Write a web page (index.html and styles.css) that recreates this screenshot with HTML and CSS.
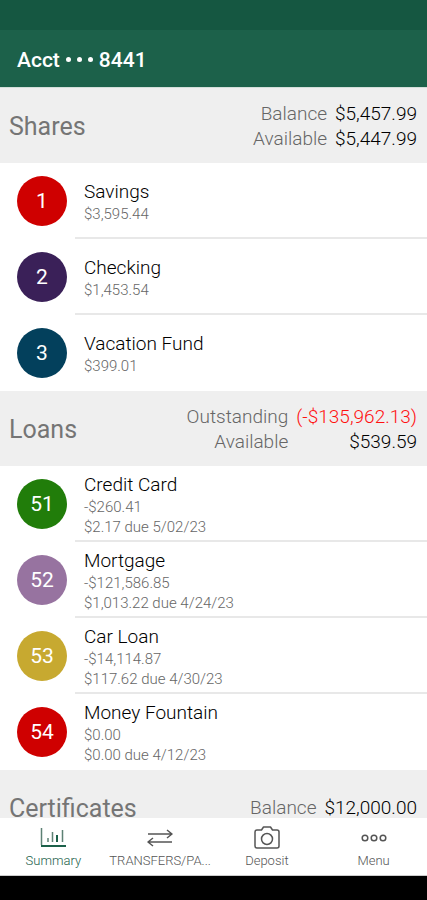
FILE: index.html
```html
<!DOCTYPE html>
<html lang="en">
<head>
<meta charset="utf-8">
<meta name="viewport" content="width=device-width, initial-scale=1">
<title>Account Summary</title>
<link rel="stylesheet" href="styles.css">
</head>
<body>
<div class="status-bar"></div>
<header class="app-bar"><h1 class="app-title">Acct <span class="dots"><i></i><i></i><i></i></span> 8441</h1></header>
<main class="content">
  <section>
    <div class="section-head">
      <h2 class="section-title">Shares</h2>
      <dl class="totals">
        <dt>Balance</dt><dd>$5,457.99</dd>
        <dt>Available</dt><dd>$5,447.99</dd>
      </dl>
    </div>
    <ul class="accounts">
      <li class="account"><span class="badge red">1</span><div class="details"><h3 class="name">Savings</h3><p class="line">$3,595.44</p></div></li>
      <li class="account"><span class="badge indigo">2</span><div class="details"><h3 class="name">Checking</h3><p class="line">$1,453.54</p></div></li>
      <li class="account"><span class="badge navy">3</span><div class="details"><h3 class="name">Vacation Fund</h3><p class="line">$399.01</p></div></li>
    </ul>
  </section>
  <section>
    <div class="section-head">
      <h2 class="section-title">Loans</h2>
      <dl class="totals">
        <dt>Outstanding</dt><dd class="negative">(-$135,962.13)</dd>
        <dt>Available</dt><dd>$539.59</dd>
      </dl>
    </div>
    <ul class="accounts">
      <li class="account"><span class="badge green">51</span><div class="details"><h3 class="name">Credit Card</h3><p class="line">-$260.41</p><p class="line">$2.17 due 5/02/23</p></div></li>
      <li class="account"><span class="badge mauve">52</span><div class="details"><h3 class="name">Mortgage</h3><p class="line">-$121,586.85</p><p class="line">$1,013.22 due 4/24/23</p></div></li>
      <li class="account"><span class="badge gold">53</span><div class="details"><h3 class="name">Car Loan</h3><p class="line">-$14,114.87</p><p class="line">$117.62 due 4/30/23</p></div></li>
      <li class="account"><span class="badge red">54</span><div class="details"><h3 class="name">Money Fountain</h3><p class="line">$0.00</p><p class="line">$0.00 due 4/12/23</p></div></li>
    </ul>
  </section>
  <section>
    <div class="section-head">
      <h2 class="section-title">Certificates</h2>
      <dl class="totals"><dt>Balance</dt><dd>$12,000.00</dd></dl>
    </div>
  </section>
</main>
<nav class="tabs">
  <a class="tab active" href="#summary">
    <svg class="icon" viewBox="0 0 26 24" aria-hidden="true"><path d="M1.500 2v17" stroke="#5d8174" stroke-width="1.500"/><path d="M1 20h25" stroke-width="2"/><path d="M8 12v4M12.500 6v10M22.500 4v12" stroke="#5d8174" stroke-width="1.500"/><path d="M17 9v7" stroke-width="2"/></svg>
    <span class="tab-label">Summary</span>
  </a>
  <a class="tab" href="#transfers">
    <svg class="icon" viewBox="0 0 26 24" aria-hidden="true"><path d="M1 8h24M20 4l5 4-5 4M25 16H1M6 12l-5 4 5 4"/></svg>
    <span class="tab-label">TRANSFERS/PA...</span>
  </a>
  <a class="tab" href="#deposit">
    <svg class="icon" viewBox="0 0 26 24" aria-hidden="true"><path d="M3 4h4.500l2-3h7l2 3H23a2 2 0 0 1 2 2v14a2 2 0 0 1-2 2H3a2 2 0 0 1-2-2V6a2 2 0 0 1 2-2z"/><circle cx="13" cy="13" r="5.500"/></svg>
    <span class="tab-label">Deposit</span>
  </a>
  <a class="tab" href="#menu">
    <svg class="icon" viewBox="0 0 26 24" aria-hidden="true"><circle cx="4" cy="12" r="2.800"/><circle cx="13" cy="12" r="2.800"/><circle cx="22" cy="12" r="2.800"/></svg>
    <span class="tab-label">Menu</span>
  </a>
</nav>
<div class="system-bar"></div>
</body>
</html>
```
FILE: styles.css
```css
* { box-sizing: border-box; }
body, h1, h2, h3, p, ul, dl, dd { margin: 0; padding: 0; }
body {
  display: flex;
  flex-direction: column;
  height: 100vh;
  background: #fff;
  font-family: Roboto, "Liberation Sans", sans-serif;
}
.status-bar { flex: none; height: 30px; background: #155741; }
.app-bar {
  flex: none;
  display: flex;
  align-items: center;
  height: 58px;
  padding: 2px 17px 0;
  background: #1c614a;
  border-bottom: 1px solid #d3dfda;
  color: #fff;
}
.app-title { display: flex; align-items: center; gap: 6px; font-size: 21px; line-height: 24px; font-weight: 500; }
.dots { display: flex; gap: 6px; }
.dots i { width: 5px; height: 5px; border-radius: 50%; background: #fff; }
.content { flex: 1; min-height: 0; overflow-y: auto; scrollbar-width: none; }
.section-head {
  display: flex;
  align-items: center;
  justify-content: space-between;
  min-height: 75px;
  padding: 0 10px 0 9px;
  background: #efefef;
}
.section-title { padding-top: 2px; font-size: 25px; line-height: 32px; font-weight: 400; color: #757575; }
.totals {
  display: grid;
  grid-template-columns: auto auto;
  column-gap: 8px;
  text-align: right;
  font-size: 19px;
  line-height: 25px;
  font-weight: 300;
  color: #666;
}
.totals dd { color: #000; }
.totals .negative { color: #ff1010; }
.accounts { list-style: none; }
.account { display: flex; align-items: center; gap: 8px; height: 76px; padding-left: 17px; }
.badge {
  flex: none;
  display: grid;
  place-items: center;
  width: 50px;
  height: 50px;
  border-radius: 50%;
  color: #fff;
  font-size: 21px;
  font-weight: 400;
}
.red { background: #cf0000; }
.indigo { background: #3a2058; }
.navy { background: #03405c; }
.green { background: #217d0a; }
.mauve { background: #9773a0; }
.gold { background: #c7a930; }
.details {
  flex: 1;
  display: flex;
  flex-direction: column;
  justify-content: center;
  height: 100%;
  padding: 3px 0 0 9px;
  border-bottom: 2px solid #e8e8e8;
}
.account:last-child .details { border-bottom-color: transparent; }
.name { font-size: 19px; line-height: 24px; font-weight: 300; color: #000; }
.line { font-size: 15px; line-height: 20px; font-weight: 300; color: #666; }
.tabs { flex: none; display: grid; grid-template-columns: repeat(4, minmax(0, 1fr)); height: 58px; background: #fff; border-bottom: 1px solid #ccc; }
.tab { display: flex; flex-direction: column; align-items: center; padding: 8px 0 0; gap: 3px; color: #555; text-decoration: none; }
.active { color: #1c614a; }
.icon { width: 26px; height: 24px; fill: none; stroke: currentColor; stroke-width: 1.5; stroke-linejoin: round; }
.tab-label { white-space: nowrap; font-size: 13px; line-height: 16px; font-weight: 300; }
.system-bar { flex: none; height: 24px; background: #000; }
```
